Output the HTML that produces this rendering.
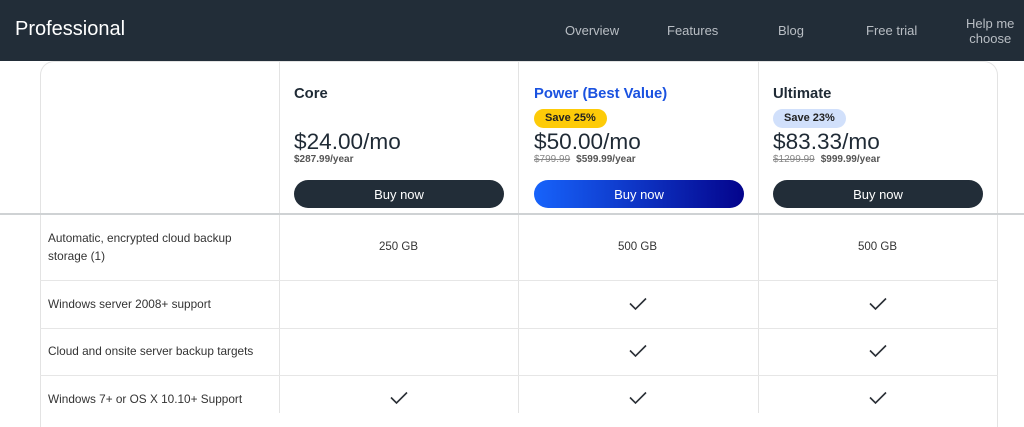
<!DOCTYPE html>
<html><head><meta charset="utf-8"><style>
*{margin:0;padding:0;box-sizing:border-box}
body{width:1024px;height:413px;overflow:hidden;background:#fff;font-family:"Liberation Sans",sans-serif;color:#1f2a35;position:relative}
.hdr{position:absolute;left:0;top:0;width:1024px;height:61px;background:#222d38}
.logo{position:absolute;left:15px;top:18px;font-size:20px;color:#fff}
.nav{position:absolute;font-size:13px;color:#b9bec4;text-align:center;line-height:15px}
.cardtop{position:absolute;left:40px;top:61px;width:958px;height:20px;border:1px solid #e3e3e3;border-bottom:none;border-radius:14px 14px 0 0}
.vl{position:absolute;top:61px;width:1px;height:352px;background:#e3e3e3}
.hl{position:absolute;left:40px;width:958px;height:1px;background:#e6e6e6}
.main{position:absolute;left:0;top:213px;width:1024px;height:2px;background:#cfd2d4}
.t{position:absolute;font-size:14.8px;font-weight:bold;top:86px}
.badge{position:absolute;top:109px;height:19px;border-radius:10px;font-size:11px;font-weight:bold;line-height:19px;padding:0 11px;color:#222}
.price{position:absolute;top:131px;font-size:22.6px;line-height:22px;color:#1f2a35}
.yr{position:absolute;top:154px;font-size:10px;line-height:12px;font-weight:bold;color:#555}
.yr s{color:#888;font-weight:normal;margin-right:6px}
.btn{position:absolute;top:180px;width:210px;height:28px;border-radius:14px;background:#222d38;color:#fff;font-size:13px;text-align:center;line-height:29px}
.f{position:absolute;left:48px;font-size:11.8px;color:#333;line-height:18px}
.c{position:absolute;font-size:11.5px;color:#333;width:239px;text-align:center}
svg.ck{position:absolute;width:18px;height:14px}
</style></head><body>
<div class="hdr">
<div class="logo">Professional</div>
<div class="nav" style="left:565px;top:23px">Overview</div>
<div class="nav" style="left:667px;top:23px">Features</div>
<div class="nav" style="left:778px;top:23px">Blog</div>
<div class="nav" style="left:866px;top:23px">Free trial</div>
<div class="nav" style="left:966px;top:16px">Help me<br>choose</div>
</div>
<div class="cardtop"></div>
<div class="vl" style="left:40px;top:75px"></div>
<div class="vl" style="left:997px;top:75px"></div>
<div class="vl" style="left:279px"></div>
<div class="vl" style="left:518px"></div>
<div class="vl" style="left:758px"></div>
<div class="main"></div>
<div class="hl" style="top:280px"></div>
<div class="hl" style="top:328px"></div>
<div class="hl" style="top:375px"></div>

<div class="t" style="left:294px">Core</div>
<div class="price" style="left:294px">$24.00/mo</div>
<div class="yr" style="left:294px">$287.99/year</div>
<div class="btn" style="left:294px">Buy now</div>

<div class="t" style="left:534px;color:#1a52e0">Power (Best Value)</div>
<div class="badge" style="left:534px;background:#fdcb08">Save 25%</div>
<div class="price" style="left:534px">$50.00/mo</div>
<div class="yr" style="left:534px"><s>$799.99</s>$599.99/year</div>
<div class="btn" style="left:534px;background:linear-gradient(90deg,#1763fb,#04048c)">Buy now</div>

<div class="t" style="left:773px">Ultimate</div>
<div class="badge" style="left:773px;background:#d1e0fb">Save 23%</div>
<div class="price" style="left:773px">$83.33/mo</div>
<div class="yr" style="left:773px"><s>$1299.99</s>$999.99/year</div>
<div class="btn" style="left:773px">Buy now</div>

<div class="f" style="top:229px">Automatic, encrypted cloud backup<br>storage (1)</div>
<div class="f" style="top:295px">Windows server 2008+ support</div>
<div class="f" style="top:342px">Cloud and onsite server backup targets</div>
<div class="f" style="top:390px">Windows 7+ or OS X 10.10+ Support</div>

<div class="c" style="left:279px;top:241px">250 GB</div>
<div class="c" style="left:518px;top:241px">500 GB</div>
<div class="c" style="left:758px;top:241px">500 GB</div>

<svg class="ck" style="left:629px;top:297px" viewBox="0 0 18 14"><path d="M1 6.5 L6.5 12 L17 1.5" fill="none" stroke="#2a2f36" stroke-width="1.6"/></svg>
<svg class="ck" style="left:869px;top:297px" viewBox="0 0 18 14"><path d="M1 6.5 L6.5 12 L17 1.5" fill="none" stroke="#2a2f36" stroke-width="1.6"/></svg>
<svg class="ck" style="left:629px;top:344px" viewBox="0 0 18 14"><path d="M1 6.5 L6.5 12 L17 1.5" fill="none" stroke="#2a2f36" stroke-width="1.6"/></svg>
<svg class="ck" style="left:869px;top:344px" viewBox="0 0 18 14"><path d="M1 6.5 L6.5 12 L17 1.5" fill="none" stroke="#2a2f36" stroke-width="1.6"/></svg>
<svg class="ck" style="left:390px;top:391px" viewBox="0 0 18 14"><path d="M1 6.5 L6.5 12 L17 1.5" fill="none" stroke="#2a2f36" stroke-width="1.6"/></svg>
<svg class="ck" style="left:629px;top:391px" viewBox="0 0 18 14"><path d="M1 6.5 L6.5 12 L17 1.5" fill="none" stroke="#2a2f36" stroke-width="1.6"/></svg>
<svg class="ck" style="left:869px;top:391px" viewBox="0 0 18 14"><path d="M1 6.5 L6.5 12 L17 1.5" fill="none" stroke="#2a2f36" stroke-width="1.6"/></svg>
</body></html>
